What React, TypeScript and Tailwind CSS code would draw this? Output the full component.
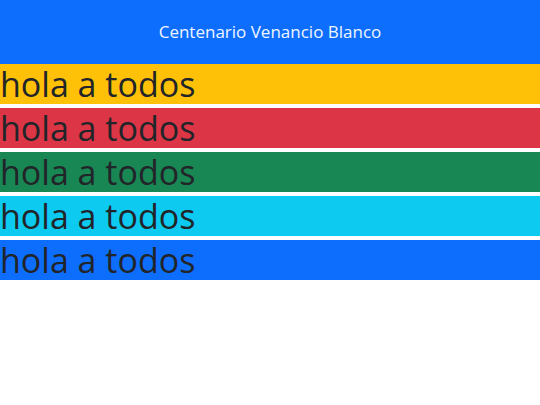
const bars = ["bg-[#ffc107]", "bg-[#dc3545]", "bg-[#198754]", "bg-[#0dcaf0]", "bg-[#0d6efd]"];

export default function App() {
  return (
    <div className="min-h-screen bg-white font-['Open_Sans',sans-serif]">
      <header className="flex h-16 items-center justify-center bg-[#0d6efd]">
        <p className="text-[17px] leading-6 text-[#f0f6ff]">Centenario Venancio Blanco</p>
      </header>
      <div className="flex flex-col gap-1">
        {bars.map((bg, i) => (
          <div key={i} className={`${bg} h-10 text-[34px] leading-10 text-[#212529]`}>
            hola a todos
          </div>
        ))}
      </div>
    </div>
  );
}
